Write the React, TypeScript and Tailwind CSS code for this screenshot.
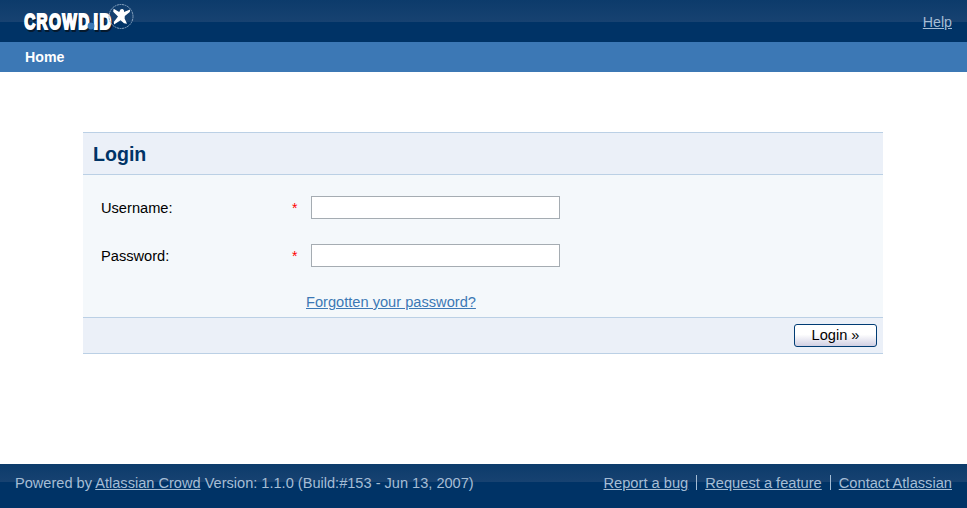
import React from 'react';

function Logo() {
  return (
    <svg width="120" height="40" viewBox="0 0 120 40" className="block" aria-label="Crowd.ID">
      <g fontFamily="'Liberation Sans', Arial, sans-serif" fontWeight="700" fontSize="22">
        <g fill="#061a2e" stroke="#061a2e" strokeWidth="2">
          <text transform="translate(10.4 30.6) scale(.7 1)" textLength="93" lengthAdjust="spacing">CROWD</text>
          <text transform="translate(79.8 30.6) scale(.74 1)" textLength="24" lengthAdjust="spacing">ID</text>
        </g>
        <g fill="#fff" stroke="#fff" strokeWidth="1.9">
          <text transform="translate(9.2 29.2) scale(.7 1)" textLength="93" lengthAdjust="spacing">CROWD</text>
          <text transform="translate(78.6 29.2) scale(.74 1)" textLength="24" lengthAdjust="spacing">ID</text>
        </g>
      </g>
      <circle cx="76" cy="26" r="3.4" fill="#3c78b5" />
      <circle cx="106" cy="16.5" r="12" fill="none" stroke="#8aa6c2" strokeWidth="1" strokeDasharray="2 .6" />
      <path d="M98.6 8.8 L104.2 12 L105.5 9.6 Q107.5 8 109 10.4 L109 12 L115.2 9.4 L114.8 12 L109.8 16 L109.6 18.6 L112 23.8 L109 23.3 L105.6 20.2 L99 24.4 L98.8 22 L103 16.5 L98.2 11.8 Z" fill="#fff" />
    </svg>
  );
}

function Field({ label }: { label: string }) {
  return (
    <label className="flex h-[23px] items-start">
      <span className="w-[191px] leading-[25px]">{label}</span>
      <span className="w-[19px] text-[14px] leading-[24px] text-[#ff0000]">*</span>
      <input className="h-[23px] w-[249px] border border-[#a5acb2] bg-white outline-none" />
    </label>
  );
}

export default function App() {
  return (
    <div className="flex h-[508px] w-[967px] flex-col bg-white font-['Liberation_Sans',Arial,sans-serif] text-[14.64px] leading-[17px] text-black">
      <header className="flex h-[42px] items-start justify-between bg-[linear-gradient(#0c3b6b_0px,#174271_22px,#003366_22px,#003366_100%)] pr-[15px] pl-[15px]">
        <Logo />
        <a className="mt-[14px] text-[14.2px] text-[#a5bdd5] underline">Help</a>
      </header>
      <nav className="h-[30px] bg-[#3c78b5] pt-[7px] pl-[25px] text-[14.2px] font-bold text-white">Home</nav>
      <main className="h-[392px] pt-[60px] pl-[83px]">
        <section className="h-[222px] w-[800px] border-y border-[#bbd0e5] bg-[#f4f8fb]">
          <h1 className="h-[42px] border-b border-[#bbd0e5] bg-[#ebf0f8] pl-[10px] text-[19.6px] leading-[42px] font-bold text-[#003366]">Login</h1>
          <div className="flex h-[142px] flex-col pt-[21px] pl-[18px]">
            <Field label="Username:" />
            <div className="h-[25px]" />
            <Field label="Password:" />
            <a className="mt-[27px] ml-[205px] text-[#3c78b5] underline">Forgotten your password?</a>
          </div>
          <div className="flex h-[36px] items-start justify-end border-t border-[#bbd0e5] bg-[#ebf0f8] pt-[6px] pr-[6px]">
            <button className="h-[23px] w-[83px] rounded-[3px] border border-[#003c74] bg-[linear-gradient(#ffffff_0%,#ffffff_45%,#d0cfe3_100%)] pb-px leading-[20px]">Login »</button>
          </div>
        </section>
      </main>
      <footer className="flex h-[44px] items-start justify-between bg-[linear-gradient(#0c3b6b_0px,#174271_18px,#003366_18px,#003366_100%)] px-[15px] pt-[11px] text-[14.58px] text-[#a5bdd5]">
        <p>
          Powered by <a className="underline">Atlassian Crowd</a> Version: 1.1.0 (Build:#153 - Jun 13, 2007)
        </p>
        <div className="flex items-start text-[14.66px]">
          <a className="underline">Report a bug</a>
          <span className="mx-[8px] h-[15px] w-px bg-[#a5bdd5]" />
          <a className="underline">Request a feature</a>
          <span className="mx-[8px] h-[15px] w-px bg-[#a5bdd5]" />
          <a className="underline">Contact Atlassian</a>
        </div>
      </footer>
    </div>
  );
}
